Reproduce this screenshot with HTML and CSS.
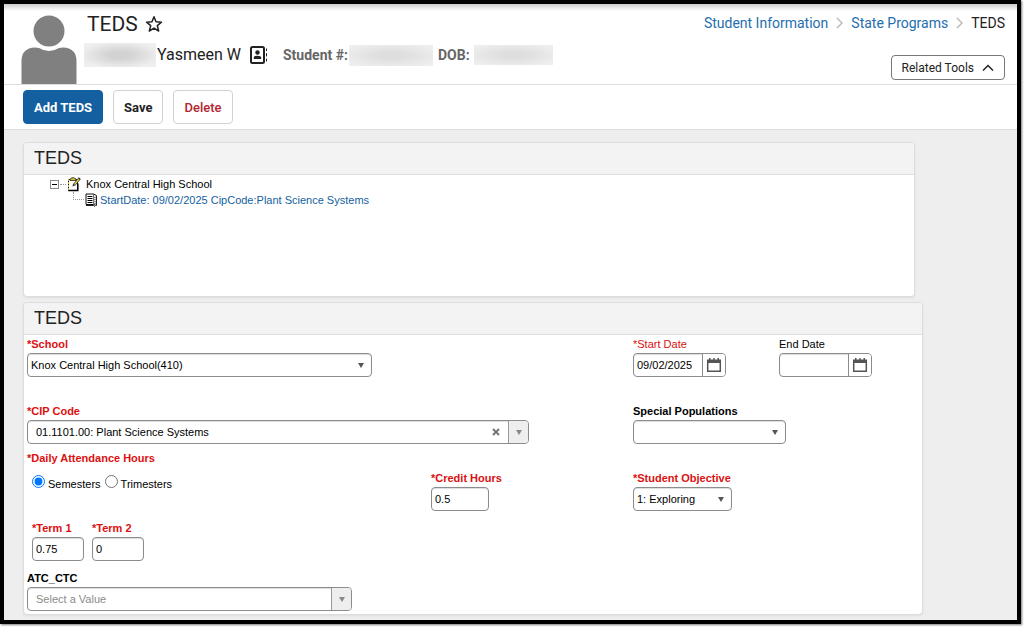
FILE: index.html
```html
<!DOCTYPE html>
<html lang="en">
<head>
<meta charset="utf-8">
<meta name="viewport" content="width=device-width, initial-scale=1">
<title>TEDS</title>
<link rel="stylesheet" href="styles.css">
</head>
<body>
<div class="frame">
  <header class="header">
    <svg class="avatar" viewBox="0 0 56 69" aria-hidden="true">
      <circle cx="28" cy="16" r="15.500"/>
      <path d="M0.500 69V46Q0.500 33 14 32.500L18 33Q28 39 38 33L42 32.500Q55.500 33 55.500 46V69Z"/>
    </svg>
    <div class="identity">
      <div class="title-row">
        <h1 class="title">TEDS</h1>
        <button class="icon-button" type="button" aria-label="Add to favorites">
          <svg class="star" viewBox="0 0 18 18"><path d="M9 1.800L11 6.800L16.500 7.200L12.300 10.700L13.700 16L9 13.100L4.300 16L5.700 10.700L1.500 7.200L7 6.800Z"/></svg>
        </button>
      </div>
      <div class="person-row">
        <span class="redacted redacted-name"></span>
        <span class="person">Yasmeen W</span>
        <button class="icon-button contact" type="button" aria-label="Contact card">
          <svg class="card-icon" viewBox="0 0 18 18"><rect x="1" y="1" width="13" height="16" rx="1.500"/><circle class="solid" cx="7.500" cy="6.500" r="2.200"/><path class="solid" d="M3.800 13V11.500Q4 9.700 7.500 9.700T11.200 11.500V13Z"/><path class="tabs" d="M16.500 2.500V5M16.500 7.200V10.400M16.500 12.600V15.500"/></svg>
        </button>
        <span class="meta">Student #:</span>
        <span class="redacted redacted-number"></span>
        <span class="meta">DOB:</span>
        <span class="redacted redacted-dob"></span>
      </div>
    </div>
    <div class="header-side">
      <nav class="crumbs" aria-label="Breadcrumb">
        <a href="#">Student Information</a>
        <svg class="crumb-arrow" viewBox="0 0 7 12"><path d="M1 1L6 6L1 11"/></svg>
        <a href="#">State Programs</a>
        <svg class="crumb-arrow" viewBox="0 0 7 12"><path d="M1 1L6 6L1 11"/></svg>
        <span>TEDS</span>
      </nav>
      <button class="related" type="button">Related Tools
        <svg class="chevron" viewBox="0 0 12 8"><path d="M1 6.500L6 1.500L11 6.500"/></svg>
      </button>
    </div>
  </header>

  <div class="toolbar">
    <button class="button button-primary" type="button">Add TEDS</button>
    <button class="button" type="button">Save</button>
    <button class="button button-danger" type="button">Delete</button>
  </div>

  <main class="main">
    <section class="panel panel-tree">
      <h2 class="panel-title">TEDS</h2>
      <ul class="tree">
        <li class="branch">
          <div class="node">
            <button class="expander" type="button" aria-label="Collapse"><svg viewBox="0 0 9 9"><rect x="0.500" y="0.500" width="8" height="8"/><path d="M2 4.500H7"/></svg></button>
            <span class="dots"></span>
            <svg class="note-icon" viewBox="0 0 14 15"><path d="M1.500 2.500H10.500V13.500H1.500Z" fill="#fff" stroke="#111"/><path d="M1.500 2V14" stroke="#c8b832" stroke-dasharray="2 1"/><path d="M3 3.500V2L5 0.800H7L9 2V3.500Z" fill="#d4c13b" stroke="#222" stroke-width="0.800"/><path d="M12.800 1.200L7 8" stroke="#222" stroke-width="2.600"/><path d="M12 2L7.500 7.500" stroke="#ead641" stroke-width="1.300"/><path d="M5.500 9.500L6 7L7.800 8.500Z" fill="#222"/><path d="M1.500 13.500H10.800V6.500" stroke="#000" stroke-width="1.500"/></svg>
            <span>Knox Central High School</span>
          </div>
          <ul class="twigs">
            <li class="node">
              <span class="elbow"></span>
              <svg class="book-icon" viewBox="0 0 13 14"><path d="M1 1H8.500V11.500H1Z" fill="#fff" stroke="#111"/><path d="M8.500 1L11.500 2.500V12.500L8.500 11.500M1 12.500H8.500L10 13.500" fill="#ddd" stroke="#222"/><path d="M2.500 3.500H7.500M2.500 5.500H7.500M2.500 7.500H7.500M2.500 9.500H7.500" stroke="#000"/><path d="M10 4V11" stroke="#444" stroke-dasharray="1 1"/></svg>
              <a href="#">StartDate: 09/02/2025 CipCode:Plant Science Systems</a>
            </li>
          </ul>
        </li>
      </ul>
    </section>

    <section class="panel panel-form">
      <h2 class="panel-title">TEDS</h2>
      <form class="form">
        <div class="row row-school">
          <div class="field">
            <label class="required strong" for="school">*School</label>
            <span class="select select-school"><select id="school"><option>Knox Central High School(410)</option></select></span>
          </div>
          <div class="field col-date">
            <label class="required" for="start">*Start Date</label>
            <span class="date"><input id="start" type="text" value="09/02/2025"><button type="button" aria-label="Choose start date"><svg viewBox="0 0 16 16"><path class="cal-top" d="M1 2.500H3V1H4.500V2.500H7.300V1H8.700V2.500H11.500V1H13V2.500H15V6H1Z"/><path class="cal-box" d="M1.700 5H14.300V14.200H1.700Z"/></svg></button></span>
          </div>
          <div class="field">
            <label for="end">End Date</label>
            <span class="date"><input id="end" type="text"><button type="button" aria-label="Choose end date"><svg viewBox="0 0 16 16"><path class="cal-top" d="M1 2.500H3V1H4.500V2.500H7.300V1H8.700V2.500H11.500V1H13V2.500H15V6H1Z"/><path class="cal-box" d="M1.700 5H14.300V14.200H1.700Z"/></svg></button></span>
          </div>
        </div>

        <div class="row row-cip">
          <div class="field">
            <label class="required strong" for="cip">*CIP Code</label>
            <span class="combo combo-cip"><input id="cip" type="text" value="01.1101.00: Plant Science Systems"><button class="clear" type="button" aria-label="Clear"><svg viewBox="0 0 8 8"><path d="M1 1L7 7M7 1L1 7"/></svg></button><button class="drop" type="button" aria-label="Open list"></button></span>
          </div>
          <div class="field col-date">
            <label class="strong" for="special">Special Populations</label>
            <span class="select select-special"><select id="special"><option></option></select></span>
          </div>
        </div>

        <div class="row row-hours">
          <fieldset class="attendance">
            <legend class="required strong">*Daily Attendance Hours</legend>
            <div class="radios">
              <input id="semesters" type="radio" name="period" checked><label for="semesters">Semesters</label>
              <input id="trimesters" type="radio" name="period"><label for="trimesters">Trimesters</label>
            </div>
            <div class="terms">
              <div class="field"><label class="required strong" for="term1">*Term 1</label><input class="text text-term" id="term1" type="text" value="0.75"></div>
              <div class="field"><label class="required strong" for="term2">*Term 2</label><input class="text text-term" id="term2" type="text" value="0"></div>
            </div>
          </fieldset>
          <div class="field col-credit">
            <label class="required strong" for="credit">*Credit Hours</label>
            <input class="text text-credit" id="credit" type="text" value="0.5">
          </div>
          <div class="field col-objective">
            <label class="required strong" for="objective">*Student Objective</label>
            <span class="select select-objective"><select id="objective"><option>1: Exploring</option></select></span>
          </div>
        </div>

        <div class="field">
          <label class="strong" for="atc">ATC_CTC</label>
          <span class="combo combo-atc"><input id="atc" type="text" placeholder="Select a Value"><button class="drop" type="button" aria-label="Open list"></button></span>
        </div>
      </form>
    </section>
  </main>
</div>
</body>
</html>
```
FILE: styles.css
```css
*, *::before, *::after { box-sizing: border-box; }

body {
  margin: 0;
  background: #fff;
  color: #000;
  font-family: "Liberation Sans", Arial, sans-serif;
  font-size: 11px;
}

button, input, select { font: inherit; color: inherit; margin: 0; }
button { padding: 0; cursor: pointer; }
a { text-decoration: none; }
svg { display: block; fill: none; }
ul { list-style: none; margin: 0; padding: 0; }

.frame {
  display: flex;
  flex-direction: column;
  min-height: calc(100vh - 4px);
  margin: 0 4px 4px 0;
  border: 4px solid #000;
  background: #eee;
  box-shadow: 1px 1px 2px #777;
}

/* Header */
.header {
  display: flex;
  height: 81px;
  padding: 0 12px 0 17px;
  border-bottom: 1px solid #ddd;
  background: linear-gradient(#ccc, #fff 7px);
  font-family: Roboto, sans-serif;
  color: #222;
}
.avatar { width: 56px; height: 69px; align-self: flex-end; fill: #808080; }
.identity { flex: 1; padding: 8px 0 0 7px; }
.title-row { display: flex; align-items: center; gap: 7px; height: 24px; padding-left: 3px; }
.title { margin: 0; font-size: 21px; font-weight: 400; line-height: 24px; }
.icon-button { border: 0; background: none; }
.star { width: 18px; height: 18px; stroke: #222; stroke-width: 1.500; stroke-linejoin: round; }
.person-row { display: flex; align-items: center; height: 24px; margin-top: 7px; }
.person { font-size: 16px; line-height: 24px; }
.contact { margin: 0 15px 0 9px; }
.card-icon { width: 18px; height: 18px; stroke: #222; stroke-width: 2; }
.card-icon .solid { fill: #222; stroke: none; }
.card-icon .tabs { stroke-width: 1; }
.meta { color: #666; font-size: 14px; font-weight: 700; line-height: 24px; }
.redacted { background: radial-gradient(ellipse, #dedede 20%, #efefef 90%); }
.redacted-name { width: 72px; height: 24px; margin-right: 1px; background: radial-gradient(ellipse, #d2d2d2 20%, #efefef 80%); }
.redacted-number { width: 84px; height: 21px; margin: 0 5px 0 1px; }
.redacted-dob { width: 79px; height: 20px; margin-left: 4px; }

.header-side { display: flex; flex-direction: column; align-items: flex-end; justify-content: space-between; padding: 10px 0 4px; }
.crumbs { display: flex; align-items: center; gap: 8px; font-size: 14px; line-height: 18px; }
.crumbs a { color: #256eae; }
.crumb-arrow { width: 7px; height: 12px; stroke: #bbb; stroke-width: 1.500; }
.related {
  display: flex;
  align-items: center;
  gap: 8px;
  height: 25px;
  padding: 0 10px;
  border: 1px solid #777;
  border-radius: 4px;
  background: #fff;
  font-size: 12px;
}
.chevron { width: 12px; height: 8px; stroke: #222; stroke-width: 1.500; }

/* Toolbar */
.toolbar {
  display: flex;
  gap: 10px;
  padding: 5px 19px;
  border-bottom: 1px solid #ddd;
  background: #fff;
}
.button {
  height: 34px;
  padding: 0 10px;
  border: 1px solid #d2d2d2;
  border-radius: 4px;
  background: #fff;
  color: #222;
  font-family: Roboto, sans-serif;
  font-size: 13px;
  font-weight: 700;
}
.button-primary { border-color: #145fa0; background: #145fa0; color: #fff; }
.button-danger { color: #b3252f; font-weight: 500; }

/* Panels */
.main {
  flex: 1;
  padding: 12px 0 5px 19px;
}
.panel {
  border: 1px solid #ddd;
  border-radius: 4px;
  background: #fff;
  box-shadow: 0 1px 2px #ddd;
}
.panel-tree { min-height: 155px; margin: 0 102px 5px 0; }
.panel-form { margin-right: 94px; }
.panel-title {
  margin: 0;
  padding: 0 10px;
  border-bottom: 1px solid #ddd;
  border-radius: 3px 3px 0 0;
  background: #f3f3f3;
  color: #222;
  font-size: 18px;
  font-weight: 400;
  line-height: 31px;
}

/* Tree */
.tree { padding: 1px 0 0 26px; }
.node { display: flex; align-items: center; height: 16px; }
.expander { width: 9px; height: 9px; border: 0; background: none; }
.expander rect { stroke: #888; }
.expander path { stroke: #000; }
.dots { width: 6px; margin: 0 1px; border-top: 1px dotted #999; }
.note-icon { width: 14px; height: 15px; margin-right: 5px; }
.twigs { padding-left: 23px; }
.elbow { width: 11px; height: 8px; align-self: flex-start; border-left: 1px dotted #999; border-bottom: 1px dotted #999; }
.book-icon { width: 13px; height: 14px; margin: 0 2px 0 1px; }
.node a { color: #145fa0; }

/* Form */
.form { padding: 3px; }
.row { display: grid; grid-template-columns: 404px 202px 146px 1fr; align-items: start; }
.row-school { margin-bottom: 28px; }
.row-cip { margin-bottom: 8px; }
.row-hours { margin-bottom: 11px; }
.col-date { grid-column: 3; }
.row-cip .field:first-child { grid-column: 1 / 3; }
.row-cip .col-date { grid-row: 1; }
.col-credit, .col-objective { padding-top: 20px; }

.field { display: flex; flex-direction: column; align-items: flex-start; gap: 3px; }
.field label, .attendance legend { line-height: 12px; white-space: nowrap; }
.strong { font-weight: 700; }
.required { color: #dc1010; }

.text, .select select, .date, .combo {
  height: 24px;
  border: 1px solid #8c8c8c;
  border-radius: 4px;
  background: #fff;
  box-shadow: inset 0 1px 1px #ddd;
}
.text { padding: 0 3px; }
.text-term { width: 52px; }
.text-credit { width: 58px; }

.select { display: grid; align-items: center; }
.select > select, .select::after { grid-area: 1 / 1; }
.select select { width: 100%; padding: 0 20px 0 3px; appearance: none; }
.select::after, .drop::after {
  content: "";
  border: 3px solid transparent;
  border-top: 5px solid #555;
  border-bottom: 0;
}
.select::after { justify-self: end; margin-right: 8px; pointer-events: none; }
.select-school { width: 345px; }
.select-special { width: 153px; }
.select-objective { width: 99px; }

.date, .combo { display: flex; overflow: hidden; }
.date { width: 93px; }
.date input, .combo input { flex: 1; min-width: 0; border: 0; background: none; }
.date input { padding: 0 3px; }
.date button { display: grid; place-items: center; width: 23px; border: 0; border-left: 1px solid #8c8c8c; background: #fff; }
.date svg { width: 16px; height: 16px; }
.cal-top { fill: #555; }
.cal-box { stroke: #555; stroke-width: 1.500; }

.combo input { padding: 0 8px; }
.combo input::placeholder { color: #8a8a8a; opacity: 1; }
.combo-cip { width: 502px; }
.combo-atc { width: 325px; }
.clear { display: grid; place-items: center; width: 24px; border: 0; background: none; }
.clear svg { width: 8px; height: 8px; stroke: #777; stroke-width: 2; }
.drop { display: grid; place-items: center; width: 20px; border: 0; border-left: 1px solid #999; background: #eee; }
.drop::after { border-top-color: #888; }

.attendance { min-width: 0; margin: 0; padding: 0; border: 0; }
.attendance legend { padding: 0; }
.radios { display: flex; align-items: center; height: 14px; margin: 10px 0 34px 5px; }
.radios input { width: 13px; height: 13px; }
.radios label { margin: 5px 4px 0 3px; }
.terms { display: flex; gap: 8px; padding-left: 5px; }
```
